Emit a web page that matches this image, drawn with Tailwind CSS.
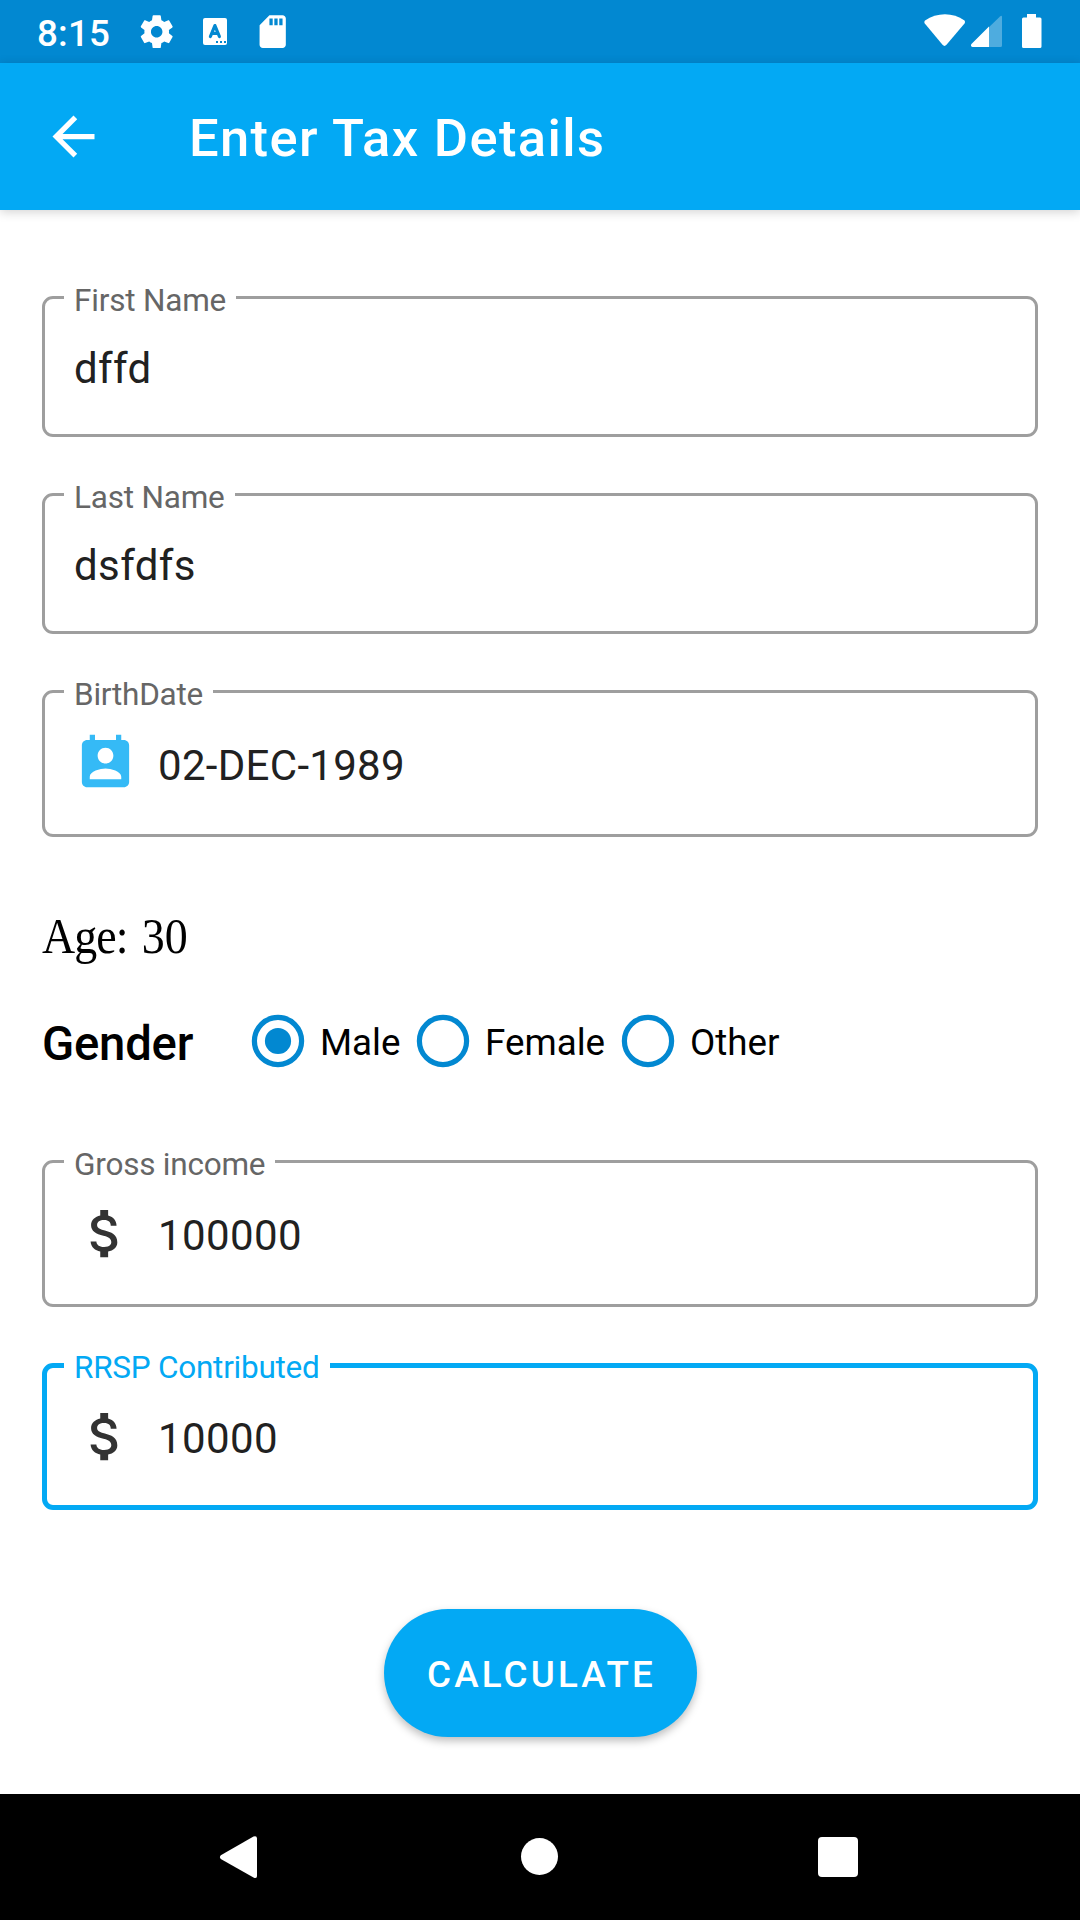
<!DOCTYPE html>
<html lang="en">
<head>
<meta charset="utf-8">
<title>Enter Tax Details</title>
<script src="https://cdn.jsdelivr.net/npm/@tailwindcss/browser@4"></script>
</head>
<body class="bg-white font-[Roboto,sans-serif]">
<div class="flex h-[1920px] w-[1080px] flex-col overflow-hidden bg-white">
  <!-- Status bar -->
  <div class="flex h-[63px] shrink-0 items-start bg-[#0288d1] text-white">
    <span class="ml-[37px] mt-[12px] w-[100px] text-[36.75px] leading-[43px] font-medium tracking-[0.2px]">8:15</span>
    <svg class="mt-[12px] size-[39.4px]" viewBox="0 0 24 24" fill="currentColor"><path d="M19.43 12.98c.04-.32.07-.64.07-.98s-.03-.66-.07-.98l2.11-1.65c.19-.15.24-.42.12-.64l-2-3.46c-.12-.22-.39-.3-.61-.22l-2.49 1c-.52-.4-1.08-.73-1.69-.98l-.38-2.65C14.46 2.18 14.25 2 14 2h-4c-.25 0-.46.18-.49.42l-.38 2.65c-.61.25-1.17.59-1.69.98l-2.49-1c-.23-.09-.49 0-.61.22l-2 3.46c-.13.22-.07.49.12.64l2.11 1.65c-.04.32-.07.65-.07.98s.03.66.07.98l-2.11 1.65c-.19.15-.24.42-.12.64l2 3.46c.12.22.39.3.61.22l2.49-1c.52.4 1.08.73 1.69.98l.38 2.65c.03.24.24.42.49.42h4c.25 0 .46-.18.49-.42l.38-2.65c.61-.25 1.17-.59 1.69-.98l2.49 1c.23.09.49 0 .61-.22l2-3.46c.12-.22.07-.49-.12-.64l-2.11-1.65zM12 15.5c-1.93 0-3.5-1.57-3.5-3.5s1.57-3.5 3.5-3.5 3.5 1.57 3.5 3.5-1.57 3.5-3.5 3.5z"/></svg>
    <svg class="ml-[26.6px] mt-[18px] h-[27px] w-[24px]" viewBox="0 0 24 27"><rect width="24" height="27" rx="2" fill="#fff"/><path d="M7.400 18.500 11.900 7.600l4.500 10.900M9 15.400h6" fill="none" stroke="#0288d1" stroke-width="3.200" stroke-linejoin="round" stroke-linecap="round"/><path d="M13 23h2v2h-2zM17 23h2v2h-2zM21 23h2v2h-2z" fill="#0288d1"/></svg>
    <svg class="ml-[26.3px] mt-[12px] size-[39.4px]" viewBox="0 0 24 24" fill="currentColor"><path d="M18 2h-8L4.02 8 4 20c0 1.1.9 2 2 2h12c1.1 0 2-.9 2-2V4c0-1.1-.9-2-2-2zm-6 6h-2V4h2v4zm3 0h-2V4h2v4zm3 0h-2V4h2v4z"/></svg>
    <svg class="ml-auto mr-[38px] h-[63px] w-[118px]" viewBox="0 0 118 63" fill="currentColor"><path d="M1 20.5C13 12 29 12 40.500 20.500Q41.500 22 40.500 23.500L22.500 44.800Q20.500 47 18.500 44.800L.8 23.500Q-.2 22 1 20.500Z"/><path fill-opacity=".3" d="M47.500 44 76 16.500Q78 15 78 17V45.500Q78 47 76.500 47H48.500Q46 46 47.500 44Z"/><path d="M47.500 44 65 26.500V47H48.500Q46 46 47.500 44Z"/><path d="M103 14h9v3.500h4q1.500 0 1.500 1.500v27.500q0 1.500-1.500 1.500h-16.500q-1.500 0-1.500-1.500V19q0-1.500 1.500-1.500H103z"/></svg>
  </div>
  <!-- App bar -->
  <header class="flex h-[147px] shrink-0 items-center bg-[#03a9f4] pl-[42px] text-white shadow-[0_2px_10px_rgba(0,0,0,0.18)]">
    <svg class="size-[63px]" viewBox="0 0 24 24" fill="currentColor"><path d="M20 11H7.830l5.590-5.590L12 4l-8 8 8 8 1.410-1.410L7.830 13H20v-2z"/></svg>
    <h1 class="ml-[84px] mt-[2px] text-[52.5px] leading-[62px] font-medium tracking-[1.36px]">Enter Tax Details</h1>
  </header>

  <main class="flex flex-1 flex-col px-[42px] pt-[86px]">
    <div class="relative h-[141px] rounded-[11px] border-3 border-[#9e9e9e] pt-[45px] pl-[29px]">
      <label class="absolute left-[19px] top-[-17px] bg-white px-[10px] text-[31.5px] leading-[37px] tracking-[-0.2px] text-[#666]">First Name</label>
      <div class="text-[42px] leading-[49px] tracking-[0.4px] text-[#212121]">dffd</div>
    </div>
    <div class="relative mt-[56px] h-[141px] rounded-[11px] border-3 border-[#9e9e9e] pt-[45px] pl-[29px]">
      <label class="absolute left-[19px] top-[-17px] bg-white px-[10px] text-[31.5px] leading-[37px] tracking-[-0.2px] text-[#666]">Last Name</label>
      <div class="text-[42px] leading-[49px] tracking-[0.4px] text-[#212121]">dsfdfs</div>
    </div>
    <div class="relative mt-[56px] flex h-[147px] items-start rounded-[11px] border-3 border-[#9e9e9e] pl-[29px]">
      <label class="absolute left-[19px] top-[-17px] bg-white px-[10px] text-[31.5px] leading-[37px] tracking-[-0.25px] text-[#666]">BirthDate</label>
      <svg class="mt-[39px] size-[63px] text-[#35baf6]" viewBox="0 0 24 24" fill="currentColor"><path d="M19 3h-1V1h-2v2H8V1H6v2H5c-1.110 0-2 .9-2 2v14c0 1.100.89 2 2 2h14c1.100 0 2-.9 2-2V5c0-1.100-.9-2-2-2zm-7 3c1.660 0 3 1.340 3 3s-1.340 3-3 3-3-1.340-3-3 1.340-3 3-3zm6 12H6v-1c0-2 4-3.100 6-3.100s6 1.100 6 3.100v1z"/></svg>
      <div class="ml-[21px] mt-[48px] text-[42px] leading-[49px] tracking-[0.3px] text-[#212121]">02-DEC-1989</div>
    </div>

    <div class="mt-[70px] h-[58px] origin-left scale-x-90 font-['Liberation_Serif',serif] text-[51px] leading-[58px] [word-spacing:3px] text-black"><span class="tracking-[-1px]">Age:</span> 30</div>

    <div class="mt-[34px] flex h-[84px] items-center text-black">
      <span class="mt-[5px] w-[194px] text-[47.25px] leading-[56px] font-medium tracking-[-0.2px]">Gender</span>
      <div class="flex w-[165px] items-center"><svg class="size-[84px] shrink-0" viewBox="0 0 84 84"><circle cx="42" cy="42" r="23.600" fill="none" stroke="#0288d1" stroke-width="5.200"/><circle cx="42" cy="42" r="13.100" fill="#0288d1"/></svg><span class="mt-[2px] text-[36.75px] leading-[43px]">Male</span></div>
      <div class="flex w-[205px] items-center"><svg class="size-[84px] shrink-0" viewBox="0 0 84 84"><circle cx="42" cy="42" r="23.600" fill="none" stroke="#0288d1" stroke-width="5.200"/></svg><span class="mt-[2px] text-[36.75px] leading-[43px]">Female</span></div>
      <div class="flex items-center"><svg class="size-[84px] shrink-0" viewBox="0 0 84 84"><circle cx="42" cy="42" r="23.600" fill="none" stroke="#0288d1" stroke-width="5.200"/></svg><span class="mt-[2px] text-[36.75px] leading-[43px]">Other</span></div>
    </div>

    <div class="relative mt-[77px] flex h-[147px] items-start rounded-[11px] border-3 border-[#9e9e9e] pl-[29px]">
      <label class="absolute left-[19px] top-[-17px] bg-white px-[10px] text-[31.5px] leading-[37px] tracking-[-0.22px] text-[#666]">Gross income</label>
      <svg class="mt-[39px] size-[63px] text-[#333]" viewBox="0 0 24 24" fill="currentColor"><path d="M11.800 10.900c-2.270-.59-3-1.200-3-2.150 0-1.090 1.010-1.850 2.700-1.850 1.780 0 2.440.85 2.500 2.100h2.210c-.07-1.720-1.120-3.300-3.210-3.810V3h-3v2.160c-1.940.42-3.500 1.680-3.500 3.610 0 2.310 1.910 3.460 4.700 4.130 2.500.6 3 1.480 3 2.410 0 .69-.49 1.790-2.700 1.790-2.060 0-2.870-.92-2.980-2.100h-2.200c.12 2.190 1.760 3.420 3.680 3.830V21h3v-2.150c1.950-.37 3.500-1.500 3.500-3.550 0-2.840-2.430-3.810-4.700-4.400z"/></svg>
      <div class="ml-[21px] mt-[48px] text-[42px] leading-[49px] tracking-[0.4px] text-[#212121]">100000</div>
    </div>
    <div class="relative mt-[56px] flex h-[147px] items-start rounded-[11px] border-5 border-[#03a9f4] pl-[27px]">
      <label class="absolute left-[17px] top-[-19px] bg-white px-[10px] text-[31.5px] leading-[37px] tracking-[-0.25px] text-[#03a9f4]">RRSP Contributed</label>
      <svg class="mt-[37px] size-[63px] text-[#333]" viewBox="0 0 24 24" fill="currentColor"><path d="M11.800 10.900c-2.270-.59-3-1.200-3-2.150 0-1.090 1.010-1.850 2.700-1.850 1.780 0 2.440.85 2.500 2.100h2.210c-.07-1.720-1.120-3.300-3.210-3.810V3h-3v2.160c-1.940.42-3.500 1.680-3.500 3.610 0 2.310 1.910 3.460 4.700 4.130 2.500.6 3 1.480 3 2.410 0 .69-.49 1.790-2.700 1.790-2.060 0-2.870-.92-2.980-2.100h-2.200c.12 2.190 1.760 3.420 3.680 3.830V21h3v-2.150c1.950-.37 3.500-1.500 3.500-3.550 0-2.840-2.430-3.810-4.700-4.400z"/></svg>
      <div class="ml-[21px] mt-[46px] text-[42px] leading-[49px] tracking-[0.4px] text-[#212121]">10000</div>
    </div>

    <button class="mt-[99px] ml-[342px] flex h-[128px] w-[313px] items-center justify-center rounded-full bg-[#03a9f4] pt-[3px] pl-[2px] text-[36.75px] leading-[43px] font-medium tracking-[3.15px] text-white shadow-[0_4px_8px_rgba(0,0,0,0.26)]">CALCULATE</button>
  </main>

  <!-- Navigation bar -->
  <nav class="flex h-[126px] shrink-0 items-start bg-black text-white">
    <svg class="ml-[219px] mt-[41px] h-[44px] w-[39px]" viewBox="0 0 39 44" fill="currentColor"><path d="M1.800 20.200 34.500 1.500Q38 .5 38 3.500V41Q38 44 34.500 42.500L1.800 24Q0 22 1.800 20.200Z"/></svg>
    <div class="ml-[263px] mt-[44px] size-[37px] rounded-full bg-white"></div>
    <div class="ml-[260px] mt-[43px] size-[40px] rounded-[4px] bg-white"></div>
  </nav>
</div>
</body>
</html>
